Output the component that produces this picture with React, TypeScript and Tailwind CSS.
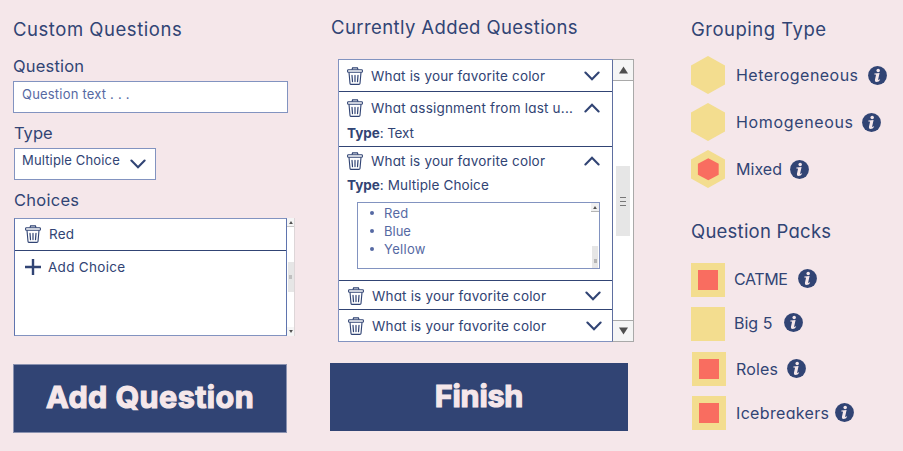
import type { ReactNode } from "react";

function Trash({ className = "" }: { className?: string }) {
  return (
    <svg viewBox="0 0 16 18" fill="none" stroke="#314474" className={`h-[18px] w-4 shrink-0 ${className}`}>
      <path d="M5 2.6 L5.6 0.8 H10.4 L11 2.6" strokeWidth="1.2" />
      <rect x="0.6" y="2.7" width="14.8" height="2.5" rx="0.8" strokeWidth="1.1" />
      <path d="M2 5.4 L3 16.4 Q3.1 17.4 4.2 17.4 H11.8 Q12.9 17.4 13 16.4 L14 5.4" strokeWidth="1.1" />
      <path d="M5 8.4 L5.5 14.6 M8 8.4 V14.6 M11 8.4 L10.5 14.6" strokeWidth="1.2" strokeLinecap="round" />
    </svg>
  );
}

function Chevron({ up = false, className = "" }: { up?: boolean; className?: string }) {
  return (
    <svg viewBox="0 0 16 10" fill="none" stroke="#314474" strokeWidth="2.1" strokeLinecap="round" className={`h-[10px] w-4 shrink-0 ${className}`}>
      <path d={up ? "M1.4 8.4 L8 1.8 L14.6 8.4" : "M1.4 1.6 L8 8.2 L14.6 1.6"} />
    </svg>
  );
}

function Info() {
  return (
    <svg viewBox="0 0 19 19" className="size-[19px] shrink-0">
      <circle cx="9.5" cy="9.5" r="9.4" fill="#314474" />
      <circle cx="10.2" cy="4.5" r="1.75" fill="#f5e7ea" />
      <path d="M6.4 7.5 L11.6 7 L10.2 13.3 Q10.1 14.2 10.6 14.1 Q11.1 13.9 11.6 13.3 L12.2 13.8 Q10.8 16 8.6 16 Q6.5 15.9 6.9 13.9 L8 9.1 Q8.1 8.4 7.4 8.4 H6.3 Z" fill="#f5e7ea" />
    </svg>
  );
}

function Hex({ selected = false }: { selected?: boolean }) {
  return (
    <svg viewBox="0 0 34 38" className="h-[38px] w-[34px] shrink-0">
      <path d="M17 0 L34 9.5 V28.5 L17 38 L0 28.5 V9.5 Z" fill="#f3dd8f" />
      {selected && <path d="M17.3 8.2 L27.7 13.7 V24.7 L17.3 30.2 L6.9 24.7 V13.7 Z" fill="#f96d60" />}
    </svg>
  );
}

function Square({ selected = false }: { selected?: boolean }) {
  return (
    <span className="flex size-[34px] shrink-0 bg-[#f3dd8f]">
      {selected && <span className="mt-[7px] ml-[7px] size-5 bg-[#f96d60]" />}
    </span>
  );
}

function Option({ icon, label, className, labelClass, captionClass = "" }: { icon: ReactNode; label: string; className: string; labelClass: string; captionClass?: string }) {
  return (
    <div className={`flex items-center ${className}`}>
      {icon}
      <div className={`flex items-center ${captionClass}`}>
        <span className={`shrink-0 text-base leading-5 ${labelClass}`}>{label}</span>
        <Info />
      </div>
    </div>
  );
}

function Arrow({ up = false, className }: { up?: boolean; className: string }) {
  return (
    <svg viewBox="0 0 10 8" fill="#4f4f4f" className={className}>
      <path d={up ? "M5 0 L10 8 H0 Z" : "M0 0 H10 L5 8 Z"} />
    </svg>
  );
}

function Item({ label = "What is your favorite color", up = false, className, labelClass = "ml-[8px] tracking-[0.18px]", chevronClass = "mr-[12px]" }: { label?: string; up?: boolean; className: string; labelClass?: string; chevronClass?: string }) {
  return (
    <div className={`flex h-5 items-center ${className}`}>
      <Trash className="-mt-px" />
      <span className={`text-[13.5px] leading-5 ${labelClass}`}>{label}</span>
      <Chevron up={up} className={`ml-auto ${chevronClass}`} />
    </div>
  );
}

export default function App() {
  return (
    <div className="flex h-[451px] w-[903px] overflow-hidden bg-[#f5e7ea] font-['Inter',sans-serif] whitespace-nowrap text-[#314474] [font-feature-settings:'cv11']">
      <section className="ml-[13px] w-[317px] shrink-0">
        <h2 className="mt-[17px] text-[18.5px] leading-6 tracking-[0.54px]">Custom Questions</h2>
        <h3 className="mt-[15px] text-[16.5px] leading-5 tracking-[0.18px]">Question</h3>
        <div className="mt-[5px] h-8 w-[275px] border border-[#8293c0] bg-white pt-[2px] pl-[8px] text-[13px] leading-5 tracking-[0.2px] text-[#5669a3]">Question text . . .</div>
        <h3 className="mt-[10px] ml-px text-[16.5px] leading-5">Type</h3>
        <div className="mt-[5px] ml-px flex h-8 w-[142px] border border-[#8293c0] bg-white pt-[1px] pl-[7px]">
          <span className="text-[13px] leading-5 tracking-[0.15px]">Multiple Choice</span>
          <Chevron className="mt-[9px] ml-[10px]" />
        </div>
        <h3 className="mt-[10px] ml-px text-[16.5px] leading-5 tracking-[0.25px]">Choices</h3>
        <div className="mt-[8px] ml-px flex h-[118px] w-[281px]">
          <div className="w-[273px] border border-[#8293c0] border-l-[#5f74ae] border-r-[#5f74ae] bg-white">
            <div className="flex h-8 items-center border-b border-[#314474] pb-[2px] pl-[10px]">
              <Trash />
              <span className="ml-[8px] text-[13.5px] leading-5 tracking-[0.2px]">Red</span>
            </div>
            <div className="mt-[6px] flex h-5 items-center pl-[10px]">
              <svg viewBox="0 0 16 16" stroke="#314474" strokeWidth="2.4" className="size-4">
                <path d="M8 0 V16 M0 8 H16" />
              </svg>
              <span className="ml-[7px] text-[13.5px] leading-5 tracking-[0.3px]">Add Choice</span>
            </div>
          </div>
          <div className="flex w-2 flex-col items-center border-r border-[#ddd6d8] bg-white">
            <div className="flex h-[9px] w-full items-center justify-center border-b border-[#c9c9c9] bg-[#f5f5f5]"><Arrow up className="h-[3px] w-1" /></div>
            <div className="mt-[35px] flex h-[30px] w-[6px] items-center justify-center bg-[#e6e6e6]"><span className="h-1 w-[3px] bg-[#c0c0c0]" /></div>
            <div className="mt-auto flex h-[9px] w-full items-center justify-center bg-[#f5f5f5]"><Arrow className="h-[3px] w-1" /></div>
          </div>
        </div>
        <button className="mt-[28px] flex h-[69px] w-[274px] items-center justify-center border border-[#8a92b0] bg-[#314474] pb-[3px] text-[30.5px] font-bold tracking-[0.45px] text-[#f5e7ea] [-webkit-text-stroke:1.2px_#f5e7ea]">Add Question</button>
      </section>

      <section className="w-[361px] shrink-0">
        <h2 className="mt-[15px] ml-px text-[18.5px] leading-6 tracking-[0.4px]">Currently Added Questions</h2>
        <div className="mt-[20px] ml-[8px] flex h-[283px] w-[296px]">
          <div className="w-[274px] border border-r-0 border-[#8293c0] bg-white">
            <div className="h-8 border-b border-[#314474] pt-[6px]">
              <Item className="pl-[8px]" />
            </div>
            <div className="h-[55px] border-b border-[#314474] pt-[6px]">
              <Item up label="What assignment from last u..." labelClass="ml-[8px] tracking-[0.21px]" className="pl-[8px]" />
              <p className="mt-[5px] pl-[8px] text-[13.5px] leading-5"><b className="font-bold">Type</b><span className="tracking-[-0.2px]">: Text</span></p>
            </div>
            <div className="h-[134px] border-b border-[#314474] pt-[4px]">
              <Item up className="pl-[8px]" />
              <p className="mt-[4px] pl-[8px] text-[13.5px] leading-5"><b className="font-bold">Type</b><span className="tracking-[0.12px]">: Multiple Choice</span></p>
              <div className="mt-[7px] ml-[18px] flex h-[67px] w-[243px] border border-[#8293c0] pl-[12px] text-[13px] leading-[18px] text-[#5669a3]">
                <ul className="pt-[1px]">
                  <li className="flex items-center gap-[10px] tracking-[0.3px]"><i className="size-1 rounded-full bg-[#5669a3]" />Red</li>
                  <li className="flex items-center gap-[10px]"><i className="size-1 rounded-full bg-[#5669a3]" />Blue</li>
                  <li className="flex items-center gap-[10px] tracking-[0.3px]"><i className="size-1 rounded-full bg-[#5669a3]" />Yellow</li>
                </ul>
                <div className="ml-auto flex w-2 flex-col items-center justify-between">
                  <div className="flex h-[9px] w-full items-center justify-center border-b border-[#b5b5b5] bg-[#f0f0f0]"><Arrow up className="h-[3px] w-1" /></div>
                  <div className="flex h-[22px] w-[6px] items-center justify-center bg-[#e6e6e6]"><span className="mt-[7px] h-1 w-[3px] bg-[#b5b5b5]" /></div>
                </div>
              </div>
            </div>
            <div className="h-[29px] border-b border-[#314474] pt-[5px]">
              <Item className="pl-[9px]" chevronClass="mr-[11px]" />
            </div>
            <div className="pt-[6px]">
              <Item className="pl-[9px]" chevronClass="mr-[10px]" />
            </div>
          </div>
          <div className="flex w-[22px] flex-col items-center border border-[#a9a9a9] border-l-[#5f6fa0] bg-white">
            <div className="flex h-[21px] w-full items-center justify-center border-b border-[#a9a9a9] bg-[#f5f5f5]"><Arrow up className="h-2 w-[9px]" /></div>
            <div className="mt-[85px] flex h-[70px] w-[14px] flex-col items-center justify-center gap-[3px] bg-[#e6e6e6]">
              <i className="h-px w-[6px] bg-[#777]" />
              <i className="h-px w-[6px] bg-[#777]" />
              <i className="h-px w-[6px] bg-[#777]" />
            </div>
            <div className="mt-auto flex h-[21px] w-full items-center justify-center border-t border-[#a9a9a9] bg-[#f5f5f5]"><Arrow className="h-2 w-[9px]" /></div>
          </div>
        </div>
        <button className="mt-[21px] flex h-[68px] w-[298px] items-center justify-center bg-[#314474] pb-[2px] text-[30.5px] font-bold tracking-[-0.2px] text-[#f5e7ea] [-webkit-text-stroke:1.2px_#f5e7ea]">Finish</button>
      </section>

      <section className="w-[212px] shrink-0">
        <h2 className="mt-[17px] text-[18.5px] leading-6 tracking-[0.5px]">Grouping Type</h2>
        <Option className="mt-[15px]" icon={<Hex />} label="Heterogeneous" labelClass="ml-[11px] w-[132px] tracking-[0.47px]" />
        <Option className="mt-[9px]" icon={<Hex />} label="Homogeneous" labelClass="ml-[11px] w-[126px] tracking-[0.65px]" />
        <Option className="mt-[9px]" icon={<Hex selected />} label="Mixed" labelClass="ml-[11px] w-[54px] tracking-[0.04px]" />
        <h2 className="mt-[31px] text-[18.5px] leading-6 tracking-[0.24px]">Question Packs</h2>
        <Option className="mt-[20px]" icon={<Square selected />} label="CATME" captionClass="pb-[3px]" labelClass="ml-[9px] w-[64px] tracking-[-0.4px]" />
        <Option className="mt-[10px]" icon={<Square />} label="Big 5" captionClass="pb-[3px]" labelClass="ml-[9px] w-[50px]" />
        <Option className="mt-[11px] ml-px" icon={<Square selected />} label="Roles" captionClass="pb-px" labelClass="ml-[10px] w-[51px] tracking-[0.17px]" />
        <Option className="mt-[10px] ml-px" icon={<Square selected />} label="Icebreakers" captionClass="pb-px" labelClass="ml-[10px] w-[99px] tracking-[0.33px]" />
      </section>
    </div>
  );
}
